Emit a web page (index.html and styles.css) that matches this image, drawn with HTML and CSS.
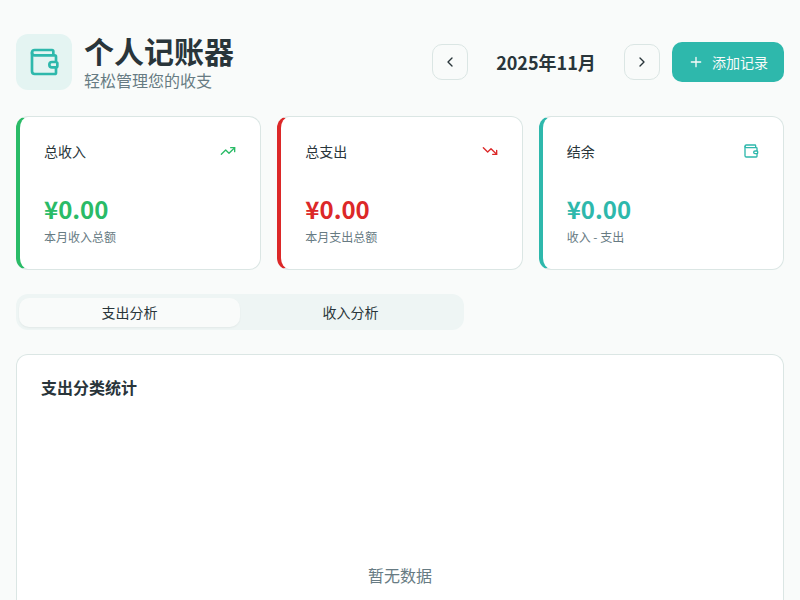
FILE: index.html
```html
<!DOCTYPE html>
<html lang="zh-CN">
<head>
<meta charset="utf-8">
<title>个人记账器</title>
<link rel="stylesheet" href="styles.css">
</head>
<body>
<main class="page">
  <header class="header">
    <div class="brand">
      <div class="logo"><svg class="icon" viewBox="0 0 24 24"><path d="M19 7V4a1 1 0 0 0-1-1H5a2 2 0 0 0 0 4h15a1 1 0 0 1 1 1v4h-3a2 2 0 0 0 0 4h3a1 1 0 0 0 1-1v-2a1 1 0 0 0-1-1"/><path d="M3 5v14a2 2 0 0 0 2 2h15a1 1 0 0 0 1-1v-4"/></svg></div>
      <div><h1>个人记账器</h1><p class="subtitle">轻松管理您的收支</p></div>
    </div>
    <div class="actions">
      <div class="month">
        <button class="nav"><svg class="icon" viewBox="0 0 24 24"><path d="m15 18-6-6 6-6"/></svg></button>
        <h2>2025年11月</h2>
        <button class="nav"><svg class="icon" viewBox="0 0 24 24"><path d="m9 18 6-6-6-6"/></svg></button>
      </div>
      <button class="add"><svg class="icon" viewBox="0 0 24 24"><path d="M5 12h14M12 5v14"/></svg>添加记录</button>
    </div>
  </header>
  <section class="stats">
    <article class="card stat income">
      <div class="stat-head"><span>总收入</span><svg class="icon" viewBox="0 0 24 24"><path d="M16 7h6v6"/><path d="m22 7-8.5 8.5-5-5L2 17"/></svg></div>
      <div class="amount">¥0.00</div><p class="note">本月收入总额</p>
    </article>
    <article class="card stat expense">
      <div class="stat-head"><span>总支出</span><svg class="icon" viewBox="0 0 24 24"><path d="M16 17h6v-6"/><path d="m22 17-8.5-8.5-5 5L2 7"/></svg></div>
      <div class="amount">¥0.00</div><p class="note">本月支出总额</p>
    </article>
    <article class="card stat balance">
      <div class="stat-head"><span>结余</span><svg class="icon" viewBox="0 0 24 24"><path d="M19 7V4a1 1 0 0 0-1-1H5a2 2 0 0 0 0 4h15a1 1 0 0 1 1 1v4h-3a2 2 0 0 0 0 4h3a1 1 0 0 0 1-1v-2a1 1 0 0 0-1-1"/><path d="M3 5v14a2 2 0 0 0 2 2h15a1 1 0 0 0 1-1v-4"/></svg></div>
      <div class="amount">¥0.00</div><p class="note">收入 - 支出</p>
    </article>
  </section>
  <div class="tabs"><button class="tab active">支出分析</button><button class="tab">收入分析</button></div>
  <section class="card chart">
    <h3>支出分类统计</h3>
    <div class="empty">暂无数据</div>
  </section>
</main>
</body>
</html>
```
FILE: styles.css
```css
* { box-sizing: border-box; margin: 0; }
html, body { height: 100%; overflow: hidden; }
body {
  background: #f9fbfa;
  color: #29353a;
  font: 16px/24px "Noto Sans CJK SC", sans-serif;
}
button { font: inherit; color: inherit; padding: 0; border: 0; background: none; }
.icon { width: 16px; height: 16px; fill: none; stroke: currentColor; stroke-width: 2; stroke-linecap: round; stroke-linejoin: round; flex: none; }
.page { height: 100%; padding: 32px 16px 0; display: flex; flex-direction: column; gap: 24px; }
.page > * { flex: none; }
.header { height: 60px; display: flex; align-items: center; justify-content: space-between; }
.brand { display: flex; align-items: center; gap: 12px; }
.logo { width: 56px; height: 56px; border-radius: 12px; background: #e4f4f2; color: #2eb8ac; display: grid; place-items: center; }
.logo .icon { width: 32px; height: 32px; }
h1 { font-size: 30px; line-height: 36px; font-weight: 700; }
.subtitle { color: #677b83; }
.actions { display: flex; align-items: center; gap: 12px; }
.month { display: flex; align-items: center; }
.month h2 { width: 156px; text-align: center; font-size: 18px; line-height: 28px; font-weight: 600; }
.nav { width: 36px; height: 36px; border: 1px solid #dbe6e4; border-radius: 10px; background: #f9fbfa; display: grid; place-items: center; }
.add { width: 112px; height: 40px; border-radius: 10px; background: #2eb8ac; color: #f9fbfa; font-size: 14px; display: flex; align-items: center; justify-content: center; gap: 8px; }
.card { background: #fff; border: 1px solid #dbe6e4; border-radius: 12px; }
.stats { display: grid; grid-template-columns: repeat(3, 1fr); gap: 16px; }
.stat { height: 154px; padding: 24px; border-left: 4px solid currentColor; }
.stat-head { display: flex; justify-content: space-between; align-items: center; height: 20px; font-size: 14px; }
.stat-head span { color: #29353a; }
.amount { margin-top: 32px; font-size: 24px; line-height: 32px; font-weight: 700; }
.note { margin-top: 4px; font-size: 12px; line-height: 16px; color: #677b83; }
.income { color: #2abb67; }
.expense { color: #dc2828; }
.balance { color: #2eb8ac; }
.tabs { width: 448px; height: 36px; padding: 4px 3px 3px; border-radius: 12px; background: #eef5f4; display: grid; grid-template-columns: 1fr 1fr; }
.tab { padding-bottom: 2px; font-size: 14px; line-height: 20px; border-radius: 10px; }
.tab.active { background: #f9fbfa; box-shadow: 0 1px 2px #0000000d; }
.chart { height: 222px; flex: 1; padding: 24px 24px 0; border-bottom: 0; border-radius: 12px 12px 0 0; }
h3 { font-size: 16px; line-height: 16px; font-weight: 600; }
.empty { margin-top: 168px; text-align: center; color: #677b83; }
```
